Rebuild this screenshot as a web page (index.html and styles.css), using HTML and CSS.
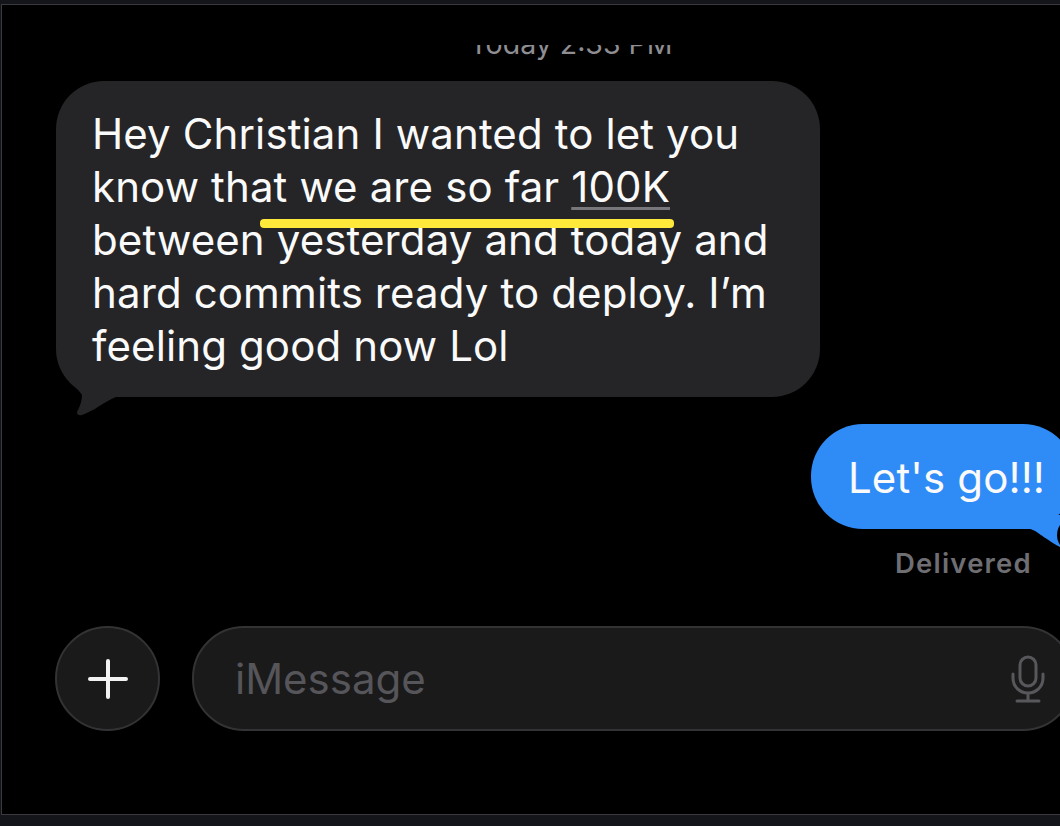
FILE: index.html

```html
<!DOCTYPE html>
<html lang="en">
<head>
    <meta charset="UTF-8">
    <title>Messages</title>
    <link rel="stylesheet" href="styles.css">
</head>
<body>
    <div class="panel">
        <div class="timestamp"><span>Today 2:33 PM</span></div>

        <div class="bubble-in">
            Hey Christian I wanted to let you<br>
            know that we are so far <span class="link">100K</span><br>
            between yesterday and today and<br>
            hard commits ready to deploy. I’m<br>
            feeling good now Lol
            <span class="highlight"></span>
            <svg class="tail-in" width="50" height="40" viewBox="0 0 50 40">
                <path d="M0 0 C4 8 10 12 12 16 C12 23 9 29 7 33 Q7 37 12 36 C24 32 32 24 46 18 L50 0 Z" fill="#252528"/>
            </svg>
        </div>

        <div class="outgoing">
            <div class="bubble-out">
                Let's go!!!
                <svg class="tail-out" width="40" height="36" viewBox="0 0 40 36">
                    <path d="M0 0 L0 14 L10 14 C16 15 22 22 40 32 L40 0 Z" fill="#2f8cf6"/>
                    <circle cx="55" cy="20" r="18" fill="#000"/>
                </svg>
            </div>
            <div class="delivered">Delivered</div>
        </div>

        <div class="composer">
            <div class="plus">
                <svg width="44" height="44" viewBox="0 0 44 44">
                    <path d="M22 4 V40 M4 22 H40" stroke="#f2f2f2" stroke-width="4" stroke-linecap="round"/>
                </svg>
            </div>
            <div class="input">
                <span class="placeholder">iMessage</span>
                <svg class="mic" width="34" height="48" viewBox="0 0 34 48">
                    <rect x="9" y="2" width="16" height="29" rx="8" fill="none" stroke="#58585c" stroke-width="3"/>
                    <path d="M2 19 V23 C2 32 9 38 17 38 C25 38 32 32 32 23 V19 M17 38 V46 M6 46 H28" fill="none" stroke="#58585c" stroke-width="3" stroke-linecap="round"/>
                </svg>
            </div>
        </div>
    </div>
</body>
</html>
```

FILE: styles.css

```css
/* Page and dark frame */
html, body {
    height: 100%;
}

body {
    margin: 0;
    background-color: #14151a;
    font-family: Inter, "Liberation Sans", sans-serif;
    overflow: hidden;
}

.panel {
    box-sizing: border-box;
    height: 811px;
    width: 1100px;
    margin: 4px 0 0 1px;
    background-color: #000;
    border-top: 1px solid #3a3a3e;
    border-left: 1px solid #3a3a3e;
    border-bottom: 1px solid #3a3a3e;
    padding: 34px 0 0 54px;
    color: #fff;
}

/* Timestamp is cut off at top and bottom in the source */
.timestamp {
    box-sizing: border-box;
    width: 764px;
    height: 15px;
    margin-top: 6px;
    margin-bottom: 21px;
    padding-left: 266px;
    overflow: hidden;
    text-align: center;
    font-size: 28.5px;
    line-height: 15px;
    white-space: nowrap;
    color: #8e8e93;
}

.timestamp span {
    position: relative;
    top: -9px;
}

/* Incoming message */
.bubble-in {
    position: relative;
    box-sizing: border-box;
    width: 764px;
    height: 316px;
    padding: 26px 0 0 36px;
    background-color: #252528;
    border-radius: 48px;
    font-size: 42px;
    line-height: 53px;
    letter-spacing: 0.12px;
    color: #fafafa;
    white-space: nowrap;
}

.link {
    text-decoration: underline;
    text-decoration-color: #77777c;
    text-decoration-thickness: 3px;
    text-underline-offset: 5px;
}

/* Yellow hand-drawn line over the text */
.highlight {
    position: absolute;
    left: 204px;
    top: 138px;
    width: 414px;
    height: 9px;
    background-color: #ffe93b;
    border-radius: 4px;
}

.tail-in {
    position: absolute;
    left: 14px;
    top: 298px;
}

/* Outgoing message */
.outgoing {
    width: 1004px;
    margin-top: 27px;
    display: flex;
    flex-direction: column;
    align-items: flex-start;
}

.bubble-out {
    position: relative;
    box-sizing: border-box;
    width: 264px;
    height: 105px;
    margin-left: 755px;
    padding: 27px 0 0 37px;
    background-color: #2f8cf6;
    border-radius: 52px;
    font-size: 42px;
    line-height: 53px;
    letter-spacing: 0.12px;
    color: #fafafa;
    white-space: nowrap;
}

.tail-out {
    position: absolute;
    left: 209px;
    top: 91px;
}

.delivered {
    margin: 18px 0 0 839px;
    font-size: 27.5px;
    line-height: 32px;
    letter-spacing: 1.2px;
    font-weight: 600;
    color: #6e6e73;
}

/* Message composer */
.composer {
    display: flex;
    align-items: center;
    gap: 32px;
    margin-top: 47px;
    margin-left: -1px;
}

.plus {
    box-sizing: border-box;
    width: 105px;
    height: 105px;
    flex: none;
    display: flex;
    align-items: center;
    justify-content: center;
    background-color: #1a1a1b;
    border: 2px solid #333335;
    border-radius: 50%;
}

.input {
    box-sizing: border-box;
    width: 883px;
    height: 105px;
    display: flex;
    align-items: center;
    justify-content: space-between;
    padding: 0 28px 0 41px;
    background-color: #1a1a1b;
    border: 2px solid #333335;
    border-radius: 52px;
}

.placeholder {
    font-size: 42px;
    color: #55555a;
}
```
